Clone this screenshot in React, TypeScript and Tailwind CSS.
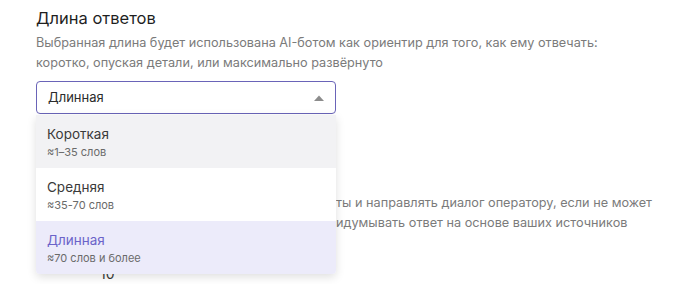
import { useState } from 'react'

interface LengthOption {
  id: string
  title: string
  hint: string
}

const options: LengthOption[] = [
  { id: 'short', title: 'Короткая', hint: '≈1–35 слов' },
  { id: 'medium', title: 'Средняя', hint: '≈35-70 слов' },
  { id: 'long', title: 'Длинная', hint: '≈70 слов и более' },
]

function ArrowUp() {
  return (
    <svg width="10" height="6" viewBox="0 0 10 6" className="fill-[#8c8c8c]">
      <path d="M0 6 L5 0.5 L10 6 Z" />
    </svg>
  )
}

export default function App() {
  const [value, setValue] = useState('long')
  const [hovered, setHovered] = useState('short')
  const current = options.find((o) => o.id === value)!

  return (
    <div className="relative h-[284px] w-[677px] overflow-hidden bg-white font-['Inter',sans-serif]">
      <div className="pl-[36px] pt-[5px]">
        <h2 className="text-[16.5px] leading-[26px] text-[#1f1f1f]">Длина ответов</h2>
        <p className="mt-[2px] text-[12.7px] leading-[20px] text-[#7b7b7b]">
          Выбранная длина будет использована AI-ботом как ориентир для того, как ему отвечать:
          <br />
          коротко, опуская детали, или максимально развёрнуто
        </p>

        <div className="relative z-10 mt-[8px] w-[300px]">
          <button
            type="button"
            className="flex h-[33px] w-full items-center justify-between rounded-[4px] border border-[#6a64b8] pl-[11px] pr-[11px] text-left text-[13px] text-[#2b2b2b]"
          >
            {current.title}
            <ArrowUp />
          </button>
          <ul className="absolute left-0 top-[34px] w-full overflow-hidden rounded-b-[4px] bg-white shadow-[0_3px_10px_rgba(0,0,0,0.13)]">
            {options.map((o) => {
              const selected = o.id === value
              const bg = selected ? 'bg-[#ecebfa]' : hovered === o.id ? 'bg-[#f2f2f4]' : 'bg-white'
              return (
                <li
                  key={o.id}
                  onClick={() => setValue(o.id)}
                  onMouseEnter={() => setHovered(o.id)}
                  className={`h-[53px] cursor-pointer px-[11px] pt-[10px] ${bg}`}
                >
                  <div className={`text-[13.5px] leading-[18px] ${selected ? 'text-[#6b63c9]' : 'text-[#3a3a3a]'}`}>
                    {o.title}
                  </div>
                  <div className="mt-[2px] text-[11px] leading-[15px] text-[#6a6a6a]">{o.hint}</div>
                </li>
              )
            })}
          </ul>
        </div>

        {/* section underneath the open list: only its right part shows */}
        <div className="mt-[79px] text-[12.7px] leading-[20px] text-[#7b7b7b]">
          <div className="flex">
            <span className="w-[300px] shrink-0" />
            <span className="whitespace-nowrap">ты и направлять диалог оператору, если не может</span>
          </div>
          <div className="flex">
            <span className="w-[300px] shrink-0" />
            <span className="whitespace-nowrap">идумывать ответ на основе ваших источников</span>
          </div>
        </div>
        <div className="mt-[31px] pl-[64px] text-[14px] leading-[20px] text-[#3a3a3a]">10</div>
      </div>
    </div>
  )
}
